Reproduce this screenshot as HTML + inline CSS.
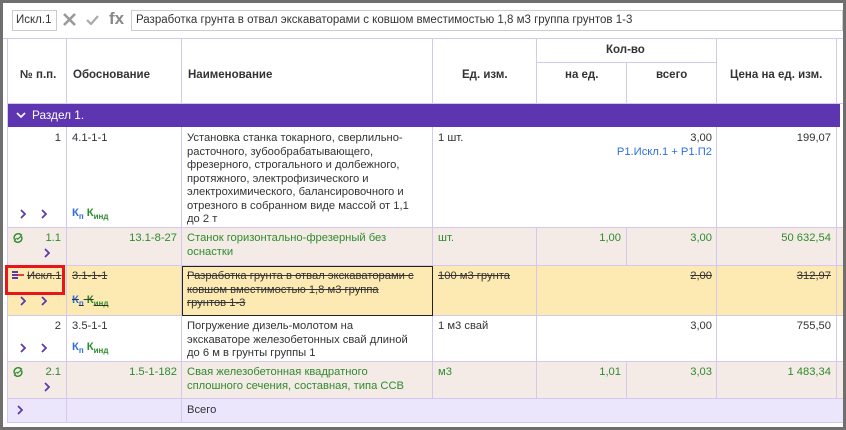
<!DOCTYPE html>
<html><head><meta charset="utf-8"><style>
*{margin:0;padding:0;box-sizing:border-box}
body{width:846px;height:430px;background:#6f6f6f;position:relative;overflow:hidden;font-family:"Liberation Sans",sans-serif;font-size:11.2px;color:#333}
.panel{position:absolute;left:3px;top:3px;width:840px;height:424px;background:#fff}
.a{position:absolute}
.row{position:absolute;left:7px;width:836px;border-bottom:1px solid #d4c8ee}
.vl{position:absolute;width:1px;background:#d4c8ee}
.t{position:absolute;line-height:13.5px;white-space:nowrap}
.r{text-align:right}
.g{color:#2e8b2e}
.b{color:#2f6fe0}
.chev{position:absolute;width:6px;height:10px}
.hd{font-weight:bold;color:#333;font-size:11.5px}
.s{text-decoration:line-through}
</style></head><body>
<svg width="0" height="0" style="position:absolute"><defs><symbol id="cv" viewBox="0 0 6 10"><polyline points="1,1 5,5 1,9" fill="none" stroke="#5a3bb0" stroke-width="1.8"/></symbol>
<symbol id="rc" viewBox="0 0 12 12"><path d="M2.5 7.5A4 4 0 0 1 9 3" fill="none" stroke="#2e8b2e" stroke-width="1.5"/><path d="M9.5 4.5A4 4 0 0 1 3 9" fill="none" stroke="#2e8b2e" stroke-width="1.5"/><path d="M7 1.5L9.5 3 8 5.5M5 10.5L2.5 9 4 6.5" fill="none" stroke="#2e8b2e" stroke-width="1.2"/><path d="M4.5 6l1.2 1.2L8 5" fill="none" stroke="#2e8b2e" stroke-width="1.1"/></symbol></defs></svg>
<div class="panel"></div>
<!-- toolbar -->
<div class="a" style="left:12px;top:10px;width:45px;height:21px;border:1px solid #ccc;padding:3px 3px;font-size:11.5px">Искл.1</div>
<svg class="a" style="left:63px;top:13px" width="13" height="13"><path d="M1 1L12 12M12 1L1 12" stroke="#999" stroke-width="2.6"/></svg>
<svg class="a" style="left:86px;top:14px" width="13" height="11"><path d="M1 6L5 10L12 2" fill="none" stroke="#aaa" stroke-width="2.2"/></svg>
<div class="a" style="left:109px;top:9px;font-size:17px;color:#888;font-weight:bold">fx</div>
<div class="a" style="left:131px;top:10px;width:712px;height:21px;border:1px solid #ccc;padding:3px 4px;font-size:11.5px">Разработка грунта в отвал экскаваторами с ковшом вместимостью 1,8 м3 группа грунтов 1-3</div>
<div class="a" style="left:3px;top:38px;width:840px;height:1px;background:#d4c8ee"></div>
<!-- header -->
<div class="a" style="left:536px;top:62px;width:180px;height:1px;background:#d4c8ee"></div>
<div class="t hd" style="left:20px;top:69px">№ п.п.</div>
<div class="t hd" style="left:73px;top:69px">Обоснование</div>
<div class="t hd" style="left:188px;top:69px">Наименование</div>
<div class="t hd" style="left:462px;top:69px">Ед. изм.</div>
<div class="t hd" style="left:606px;top:44px">Кол-во</div>
<div class="t hd" style="left:565px;top:69px">на ед.</div>
<div class="t hd" style="left:656px;top:69px">всего</div>
<div class="t hd" style="left:730px;top:69px">Цена на ед. изм.</div>
<!-- section -->
<div class="a" style="left:7px;top:103px;width:833px;height:24px;background:#5e35b1"></div>
<svg class="a" style="left:16px;top:112px" width="10" height="7"><polyline points="1,1 5,5 9,1" fill="none" stroke="#fff" stroke-width="1.6"/></svg>
<div class="t" style="left:32px;top:109px;color:#fff;font-size:11.8px">Раздел 1.</div>
<!-- rows backgrounds -->
<div class="row" style="top:127px;height:101px;background:#fff"></div>
<div class="row" style="top:228px;height:38px;background:#f4ebe6"></div>
<div class="row" style="top:266px;height:50px;background:#fdeab3"></div>
<div class="row" style="top:316px;height:46px;background:#fff"></div>
<div class="row" style="top:362px;height:37px;background:#f4ebe6"></div>
<div class="row" style="top:399px;height:24px;background:#ebe6fb"></div>
<!-- vertical lines -->
<div class="vl" style="left:7px;top:39px;height:384px"></div>
<div class="vl" style="left:66px;top:39px;height:64px"></div><div class="vl" style="left:66px;top:127px;height:296px"></div>
<div class="vl" style="left:181px;top:39px;height:64px"></div><div class="vl" style="left:181px;top:127px;height:296px"></div>
<div class="vl" style="left:432px;top:39px;height:64px"></div><div class="vl" style="left:432px;top:127px;height:272px"></div>
<div class="vl" style="left:536px;top:39px;height:64px"></div><div class="vl" style="left:536px;top:228px;height:171px"></div>
<div class="vl" style="left:626px;top:62px;height:41px"></div><div class="vl" style="left:626px;top:228px;height:38px"></div><div class="vl" style="left:626px;top:362px;height:37px"></div>
<div class="vl" style="left:716px;top:39px;height:64px"></div><div class="vl" style="left:716px;top:127px;height:272px"></div>
<div class="vl" style="left:836px;top:39px;height:64px"></div><div class="vl" style="left:836px;top:127px;height:272px"></div>
<div class="a" style="left:7px;top:103px;width:836px;height:1px;background:#d4c8ee"></div>
<!-- row 1 -->
<div class="t r" style="left:20px;width:41px;top:132px">1</div>
<div class="t" style="left:72px;top:132px">4.1-1-1</div>
<div class="t" style="left:187px;top:132px">Установка станка токарного, сверлильно-<br>расточного, зубообрабатывающего,<br>фрезерного, строгального и долбежного,<br>протяжного, электрофизического и<br>электрохимического, балансировочного и<br>отрезного в собранном виде массой от 1,1<br>до 2 т</div>
<div class="t" style="left:438px;top:132px">1 шт.</div>
<div class="t r" style="left:560px;width:152px;top:132px">3,00<br><span class="b">Р1.Искл.1 + Р1.П2</span></div>
<div class="t r" style="left:720px;width:111px;top:132px">199,07</div>
<svg class="chev" style="left:20px;top:209px"><use href="#cv"/></svg><svg class="chev" style="left:41px;top:209px"><use href="#cv"/></svg>
<div class="t" style="left:72px;top:207px;font-weight:bold"><span class="b">К<sub style="font-size:8px">п</sub></span> <span class="g">К<sub style="font-size:8px">инд</sub></span></div>
<!-- row 1.1 -->
<svg class="a" style="left:12px;top:232px" width="12" height="12"><use href="#rc"/></svg>
<div class="t r g" style="left:20px;width:41px;top:232px">1.1</div>
<svg class="chev" style="left:44px;top:248px"><use href="#cv"/></svg>
<div class="t r g" style="left:70px;width:107px;top:232px">13.1-8-27</div>
<div class="t g" style="left:187px;top:232px">Станок горизонтально-фрезерный без<br>оснастки</div>
<div class="t g" style="left:438px;top:232px">шт.</div>
<div class="t r g" style="left:540px;width:81px;top:232px">1,00</div>
<div class="t r g" style="left:630px;width:82px;top:232px">3,00</div>
<div class="t r g" style="left:720px;width:111px;top:232px">50 632,54</div>
<!-- row Искл -->
<div class="a" style="left:5px;top:265px;width:60px;height:30px;border:3px solid #e8161a"></div>
<div class="a" style="left:12px;top:271px;width:6px;height:2px;background:#5a3bb0;box-shadow:0 3px 0 #5a3bb0,0 6px 0 #5a3bb0"></div>
<div class="a" style="left:18px;top:274px;width:6px;height:2px;background:#e04040"></div>
<div class="t s" style="left:27px;top:270px">Искл.1</div>
<div class="t s" style="left:72px;top:270px">3.1-1-1</div>
<svg class="chev" style="left:20px;top:296px"><use href="#cv"/></svg><svg class="chev" style="left:41px;top:296px"><use href="#cv"/></svg>
<div class="t s" style="left:72px;top:294px;font-weight:bold"><span class="b">К<sub style="font-size:8px">п</sub></span> <span class="g">К<sub style="font-size:8px">инд</sub></span></div>
<div class="a" style="left:182px;top:266px;width:251px;height:50px;border:1.5px solid #222"></div>
<div class="t s" style="left:187px;top:270px">Разработка грунта в отвал экскаваторами с<br>ковшом вместимостью 1,8 м3 группа<br>грунтов 1-3</div>
<div class="t s" style="left:438px;top:270px">100 м3 грунта</div>
<div class="t r s" style="left:630px;width:82px;top:270px">2,00</div>
<div class="t r s" style="left:720px;width:111px;top:270px">312,97</div>
<!-- row 2 -->
<div class="t r" style="left:20px;width:41px;top:320px">2</div>
<div class="t" style="left:72px;top:320px">3.5-1-1</div>
<div class="t" style="left:187px;top:320px">Погружение дизель-молотом на<br>экскаваторе железобетонных свай длиной<br>до 6 м в грунты группы 1</div>
<div class="t" style="left:438px;top:320px">1 м3 свай</div>
<div class="t r" style="left:630px;width:82px;top:320px">3,00</div>
<div class="t r" style="left:720px;width:111px;top:320px">755,50</div>
<svg class="chev" style="left:20px;top:343px"><use href="#cv"/></svg><svg class="chev" style="left:41px;top:343px"><use href="#cv"/></svg>
<div class="t" style="left:72px;top:341px;font-weight:bold"><span class="b">К<sub style="font-size:8px">п</sub></span> <span class="g">К<sub style="font-size:8px">инд</sub></span></div>
<!-- row 2.1 -->
<svg class="a" style="left:12px;top:366px" width="12" height="12"><use href="#rc"/></svg>
<div class="t r g" style="left:20px;width:41px;top:366px">2.1</div>
<svg class="chev" style="left:44px;top:382px"><use href="#cv"/></svg>
<div class="t r g" style="left:70px;width:107px;top:366px">1.5-1-182</div>
<div class="t g" style="left:187px;top:366px">Свая железобетонная квадратного<br>сплошного сечения, составная, типа ССВ</div>
<div class="t g" style="left:438px;top:366px">м3</div>
<div class="t r g" style="left:540px;width:81px;top:366px">1,01</div>
<div class="t r g" style="left:630px;width:82px;top:366px">3,03</div>
<div class="t r g" style="left:720px;width:111px;top:366px">1 483,34</div>
<!-- total -->
<svg class="chev" style="left:17px;top:405px"><use href="#cv"/></svg>
<div class="t" style="left:187px;top:404px">Всего</div>
</body></html>
